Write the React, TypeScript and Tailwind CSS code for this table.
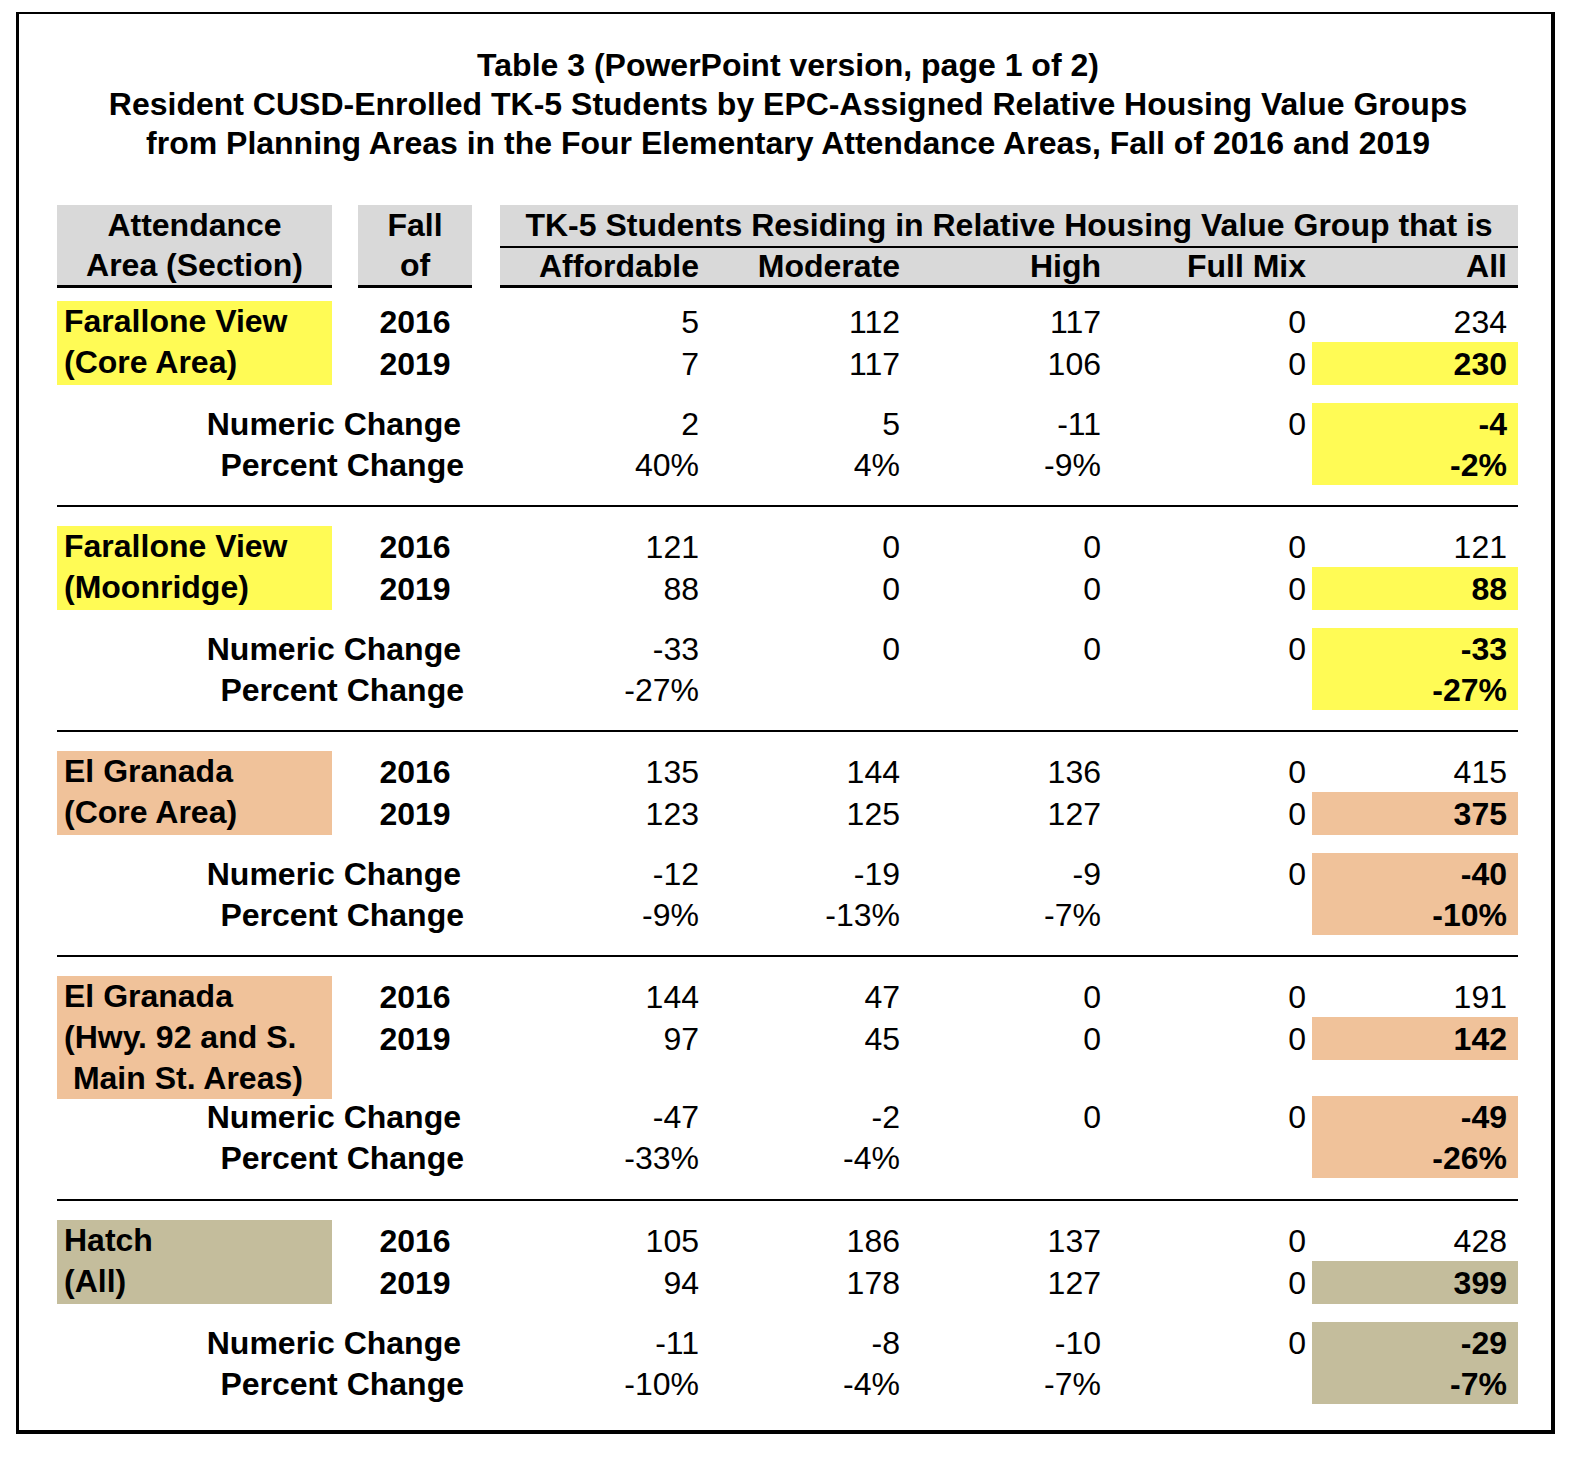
import React from 'react';

type Section = {
  label: string[];
  bg: string;
  y2016: string[];
  y2019: string[];
  num: string[];
  pct: string[];
  tall?: boolean;
  first?: boolean;
  last?: boolean;
};

const YELLOW = 'bg-[#fffb55]';
const PEACH = 'bg-[#f0c29a]';
const TAN = 'bg-[#c4bd9c]';

const sections: Section[] = [
  {
    label: ['Farallone View', '(Core Area)'],
    bg: YELLOW,
    y2016: ['5', '112', '117', '0', '234'],
    y2019: ['7', '117', '106', '0', '230'],
    num: ['2', '5', '-11', '0', '-4'],
    pct: ['40%', '4%', '-9%', '', '-2%'],
    first: true,
  },
  {
    label: ['Farallone View', '(Moonridge)'],
    bg: YELLOW,
    y2016: ['121', '0', '0', '0', '121'],
    y2019: ['88', '0', '0', '0', '88'],
    num: ['-33', '0', '0', '0', '-33'],
    pct: ['-27%', '', '', '', '-27%'],
  },
  {
    label: ['El Granada', '(Core Area)'],
    bg: PEACH,
    y2016: ['135', '144', '136', '0', '415'],
    y2019: ['123', '125', '127', '0', '375'],
    num: ['-12', '-19', '-9', '0', '-40'],
    pct: ['-9%', '-13%', '-7%', '', '-10%'],
  },
  {
    label: ['El Granada', '(Hwy. 92 and S.', '\u00a0Main St. Areas)'],
    bg: PEACH,
    y2016: ['144', '47', '0', '0', '191'],
    y2019: ['97', '45', '0', '0', '142'],
    num: ['-47', '-2', '0', '0', '-49'],
    pct: ['-33%', '-4%', '', '', '-26%'],
    tall: true,
  },
  {
    label: ['Hatch', '(All)'],
    bg: TAN,
    y2016: ['105', '186', '137', '0', '428'],
    y2019: ['94', '178', '127', '0', '399'],
    num: ['-11', '-8', '-10', '0', '-29'],
    pct: ['-10%', '-4%', '-7%', '', '-7%'],
    last: true,
  },
];

const GRID = 'grid grid-cols-[275px_26px_114px_28px_199px_201px_201px_205px_212px]';
const VALUE_COLS = ['col-start-5', 'col-start-6', 'col-start-7', 'col-start-8'];
const ROW_STARTS = { a: 'row-start-1', b: 'row-start-2', n: 'row-start-4', p: 'row-start-5' };

function ValueRow({ values, row }: { values: string[]; row: string }) {
  return (
    <>
      {values.slice(0, 4).map((v, i) => (
        <div key={i} className={`${VALUE_COLS[i]} ${row} flex items-center justify-end`}>
          {v}
        </div>
      ))}
    </>
  );
}

function SectionBlock({ s }: { s: Section }) {
  return (
    <div
      className={[
        s.first ? 'pt-[13px]' : 'pt-[19px]',
        s.last ? '' : 'border-b-2 border-black',
        s.last ? '' : s.tall ? 'pb-[21px]' : 'pb-[20px]',
      ].join(' ')}
    >
      <div
        className={`${GRID} ${
          s.tall
            ? 'grid-rows-[41px_43px_36px_41px_41px]'
            : 'grid-rows-[41px_43px_18px_41px_41px]'
        }`}
      >
        {/* Area label */}
        <div
          className={`col-start-1 row-start-1 ${
            s.tall ? 'row-span-3 h-[123px] self-start' : 'row-span-2'
          } ${s.bg} pl-[7px] font-bold`}
        >
          {s.label.map((l, i) => (
            <div key={i} className="h-[41px] leading-[41px] whitespace-pre">
              {l}
            </div>
          ))}
        </div>

        {/* Years */}
        <div className="col-start-3 row-start-1 flex items-center justify-center font-bold">2016</div>
        <div className="col-start-3 row-start-2 flex items-center justify-center font-bold">2019</div>

        <ValueRow values={s.y2016} row={ROW_STARTS.a} />
        <ValueRow values={s.y2019} row={ROW_STARTS.b} />

        <div className="col-start-9 row-start-1 flex items-center justify-end pr-[11px]">{s.y2016[4]}</div>
        <div className={`col-start-9 row-start-2 ml-[6px] ${s.bg} flex items-center justify-end pr-[11px] font-bold`}>
          {s.y2019[4]}
        </div>

        {/* Change rows */}
        <div className="col-span-3 col-start-1 row-start-4 flex items-center justify-end pr-[11px] font-bold">
          Numeric Change
        </div>
        <div className="col-span-3 col-start-1 row-start-5 flex items-center justify-end pr-[8px] font-bold">
          Percent Change
        </div>

        <ValueRow values={s.num} row={ROW_STARTS.n} />
        <ValueRow values={s.pct} row={ROW_STARTS.p} />

        <div className={`col-start-9 row-span-2 row-start-4 ml-[6px] ${s.bg} flex flex-col pr-[11px] font-bold`}>
          <div className="flex h-[41px] items-center justify-end">{s.num[4]}</div>
          <div className="flex h-[41px] items-center justify-end">{s.pct[4]}</div>
        </div>
      </div>
    </div>
  );
}

function TableHeader() {
  return (
    <div className={`${GRID} font-bold`}>
      <div className="col-start-1 h-[83px] border-b-[3px] border-black bg-[#d9d9d9] text-center">
        <div className="leading-[40px]">Attendance</div>
        <div className="leading-[40px]">Area (Section)</div>
      </div>
      <div className="col-start-3 h-[83px] border-b-[3px] border-black bg-[#d9d9d9] text-center">
        <div className="leading-[40px]">Fall</div>
        <div className="leading-[40px]">of</div>
      </div>
      <div className="col-span-5 col-start-5 h-[83px] border-b-[3px] border-black bg-[#d9d9d9]">
        <div className="h-[43px] border-b-2 border-black text-center leading-[41px]">
          TK-5 Students Residing in Relative Housing Value Group that is
        </div>
        <div className="grid grid-cols-[199px_201px_201px_205px_212px] leading-[37px]">
          <div className="text-right">Affordable</div>
          <div className="text-right">Moderate</div>
          <div className="text-right">High</div>
          <div className="text-right">Full Mix</div>
          <div className="pr-[11px] text-right">All</div>
        </div>
      </div>
    </div>
  );
}

export default function App() {
  return (
    <div className="min-h-[1460px] w-[1592px] bg-white pl-[16px] pt-[12px] font-['Liberation_Sans',Arial,sans-serif] text-[32px] text-black">
      <div className="h-[1422px] w-[1539px] border-b-4 border-l-[3px] border-r-4 border-t-2 border-black pt-[32px]">
        {/* Title */}
        <div className="pl-[6px] text-center font-bold leading-[39px]">
          <div>Table 3 (PowerPoint version, page 1 of 2)</div>
          <div>Resident CUSD-Enrolled TK-5 Students by EPC-Assigned Relative Housing Value Groups</div>
          <div>from Planning Areas in the Four Elementary Attendance Areas, Fall of 2016 and 2019</div>
        </div>

        {/* Table */}
        <div className="ml-[38px] mt-[42px] w-[1461px]">
          <TableHeader />
          {sections.map((s, i) => (
            <SectionBlock key={i} s={s} />
          ))}
        </div>
      </div>
    </div>
  );
}
